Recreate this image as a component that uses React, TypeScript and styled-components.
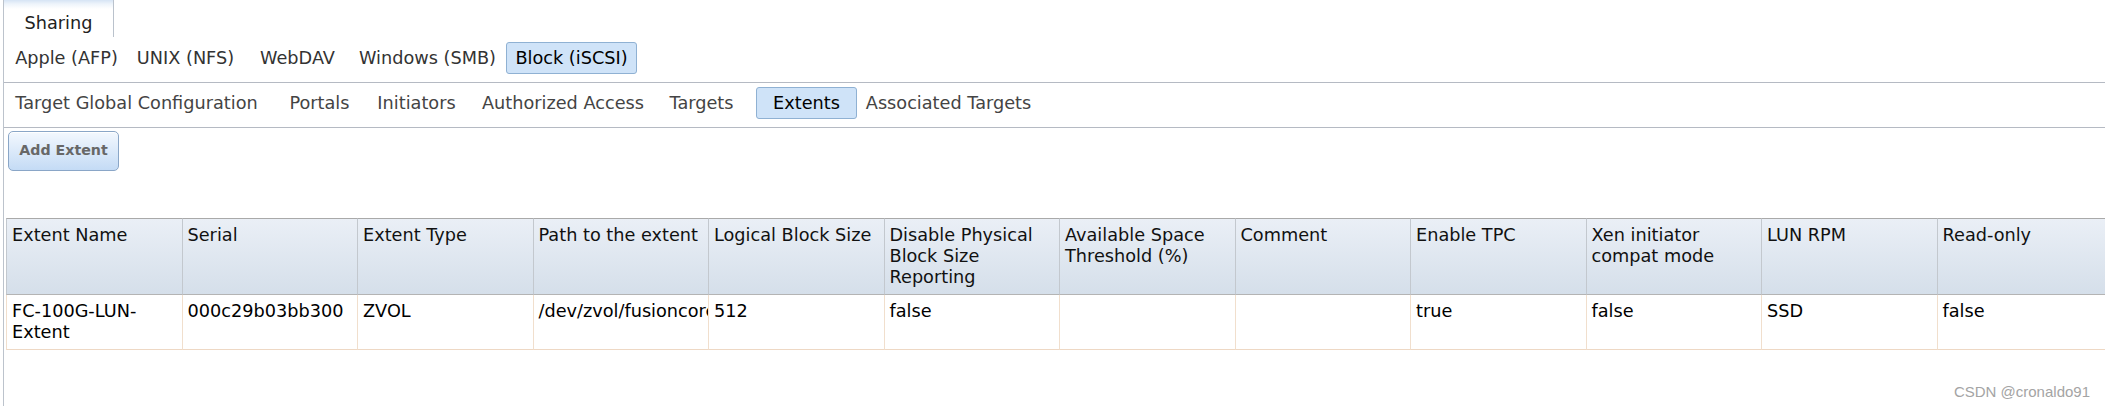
// iSCSI Extents

// ___________________________________________________________________

import * as React from 'react'
import styled, { createGlobalStyle } from 'styled-components'

// ___________________________________________________________________

type TabShape = {
  label: string
  w: number
  active?: boolean
  ml?: number
}

const shareTabs: TabShape[] = [
  { label: 'Apple (AFP)', w: 125 },
  { label: 'UNIX (NFS)', w: 113 },
  { label: 'WebDAV', w: 111 },
  { label: 'Windows (SMB)', w: 149 },
  { label: 'Block (iSCSI)', w: 131, active: true, ml: 4 }
]

const iscsiTabs: TabShape[] = [
  { label: 'Target Global Configuration', w: 265 },
  { label: 'Portals', w: 101 },
  { label: 'Initiators', w: 93 },
  { label: 'Authorized Access', w: 200 },
  { label: 'Targets', w: 77 },
  { label: 'Extents', w: 101, active: true, ml: 16 },
  { label: 'Associated Targets', w: 183 }
]

const columns = [
  'Extent Name',
  'Serial',
  'Extent Type',
  'Path to the extent',
  'Logical Block Size',
  'Disable Physical Block Size Reporting',
  'Available Space Threshold (%)',
  'Comment',
  'Enable TPC',
  'Xen initiator compat mode',
  'LUN RPM',
  'Read-only'
]

const rows = [
  [
    'FC-100G-LUN-Extent',
    '000c29b03bb300',
    'ZVOL',
    '/dev/zvol/fusioncore/FC-100G-LUN',
    '512',
    'false',
    '',
    '',
    'true',
    'false',
    'SSD',
    'false'
  ]
]

const App: React.FC = () => {
  return (
    <>
      <GlobalStyle />
      <Pane>
        <TopBar>
          <SharingTab>Sharing</SharingTab>
        </TopBar>

        <TabRow $top={5}>
          {shareTabs.map(t => (
            <Tab key={t.label} $w={t.w} $ml={t.ml} $active={t.active} $tone="#333">
              {t.label}
            </Tab>
          ))}
        </TabRow>

        <TabRow $top={4}>
          {iscsiTabs.map(t => (
            <Tab key={t.label} $w={t.w} $ml={t.ml} $active={t.active} $tone="#444">
              {t.label}
            </Tab>
          ))}
        </TabRow>

        <Toolbar>
          <AddButton>Add Extent</AddButton>
        </Toolbar>

        <Grid>
          <thead>
            <tr>
              {columns.map(c => (
                <HeadCell key={c}>{c}</HeadCell>
              ))}
            </tr>
          </thead>
          <tbody>
            {rows.map((r, i) => (
              <tr key={i}>
                {r.map((v, j) => (
                  <Cell key={j} $clip={j === 3}>
                    {v}
                  </Cell>
                ))}
              </tr>
            ))}
          </tbody>
        </Grid>
      </Pane>
      <Watermark>CSDN @cronaldo91</Watermark>
    </>
  )
}

export default App

// ___________________________________________________________________

const GlobalStyle = createGlobalStyle`
  html, body {
    margin: 0;
    padding: 0;
    background: #fff;
    overflow: hidden;
  }

  body {
    font-family: 'DejaVu Sans', Verdana, sans-serif;
    font-size: 17.7px;
    color: #222;
  }
`

const Pane = styled.div`
  box-sizing: border-box;
  margin-left: 3px;
  min-height: 406px;
  border-left: 1px solid #bcc3cc;
`

const TopBar = styled.div`
  display: flex;
  height: 37px;
`

const SharingTab = styled.div`
  box-sizing: border-box;
  width: 110px;
  height: 37px;
  padding-top: 10px;
  line-height: 27px;
  text-align: center;
  color: #222;
  border-right: 1px solid #bac2cc;
  background: linear-gradient(#d6e4f5 0, #eef4fb 4px, #fff 9px);
`

const TabRow = styled.div<{ $top: number }>`
  display: flex;
  padding: ${p => p.$top}px 0 8px;
  border-bottom: 1px solid #b5bac3;
`

const Tab = styled.div<{ $w: number; $ml?: number; $active?: boolean; $tone: string }>`
  box-sizing: border-box;
  display: flex;
  align-items: center;
  justify-content: center;
  flex: none;
  width: ${p => p.$w}px;
  height: 32px;
  margin-left: ${p => p.$ml || 0}px;
  white-space: nowrap;
  color: ${p => (p.$active ? '#000' : p.$tone)};
  background: ${p => (p.$active ? '#cfe3f8' : 'transparent')};
  border: 1px solid ${p => (p.$active ? '#8fb1d3' : 'transparent')};
  border-radius: 3px;
`

const Toolbar = styled.div`
  box-sizing: border-box;
  height: 90px;
  padding: 3px 4px 0;
`

const AddButton = styled.button`
  box-sizing: border-box;
  width: 111px;
  height: 40px;
  padding: 0 0 2px;
  font-family: 'DejaVu Sans', Verdana, sans-serif;
  font-size: 14.2px;
  font-weight: bold;
  color: #676767;
  background: linear-gradient(#f3f8fe, #c4dbf5);
  border: 1px solid #8aa6c7;
  border-radius: 5px;
  box-shadow: inset 0 1px 0 #fff;
`

const Grid = styled.table`
  width: 2106px;
  margin-left: 2px;
  table-layout: fixed;
  border-collapse: separate;
  border-spacing: 0;
  line-height: 21px;
`

const HeadCell = styled.th`
  padding: 6px 3px 6px 5px;
  font-weight: normal;
  text-align: left;
  vertical-align: top;
  color: #111;
  background: linear-gradient(#eaeff6, #d5dfea);
  border-top: 1px solid #a9a9a9;
  border-bottom: 1px solid #b4b4b4;
  border-left: 1px solid #c3c8ce;
`

const Cell = styled.td<{ $clip?: boolean }>`
  padding: 6px 3px 6px 5px;
  vertical-align: top;
  color: #000;
  background: #fff;
  border-left: 1px solid #f1dfcd;
  border-bottom: 1px solid #eed8c4;
  white-space: ${p => (p.$clip ? 'nowrap' : 'normal')};
  overflow: hidden;
`

const Watermark = styled.div`
  position: absolute;
  right: 15px;
  bottom: 6px;
  font-family: 'Liberation Sans', Arial, sans-serif;
  font-size: 15px;
  color: #a4a4a4;
`
